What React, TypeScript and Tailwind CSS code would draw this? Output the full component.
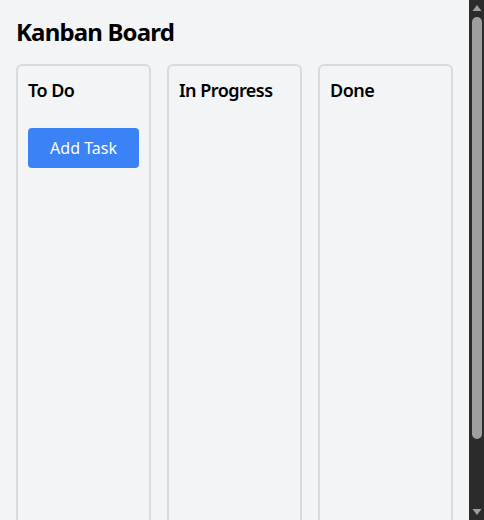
const columns = ["To Do", "In Progress", "Done"];

const Scrollbar = () => (
  <div className="flex h-screen w-[15px] shrink-0 flex-col bg-[#2b2b2b]">
    <svg width="15" height="17" viewBox="0 0 15 17" className="shrink-0">
      <polygon points="8,5 12.5,11 3.5,11" fill="#9f9f9f" />
    </svg>
    <div className="ml-[3px] h-[422px] w-[10px] shrink-0 rounded-full bg-[#9f9f9f]" />
    <div className="flex-1" />
    <svg width="15" height="16" viewBox="0 0 15 16" className="shrink-0">
      <polygon points="3.5,5 12.5,5 8,11" fill="#9f9f9f" />
    </svg>
  </div>
);

const App = () => {
  return (
    <div
      className="flex h-screen overflow-hidden bg-[#f3f4f6] text-black"
      style={{ fontFamily: '"Segoe UI", "Noto Sans", sans-serif' }}
    >
      <div className="min-w-0 flex-1 p-4">
        <h1 className="mb-4 text-2xl font-bold tracking-[-0.035em]">Kanban Board</h1>
        <div className="grid grid-cols-3 gap-4">
          {columns.map((title) => (
            <div key={title} className="min-h-screen rounded-md border-2 border-[#d9dadc] p-2.5">
              <h2 className="mb-6 text-lg font-semibold tracking-[-0.03em]">{title}</h2>
              {title === "To Do" && (
                <button className="w-full rounded bg-[#3b82f6] px-4 py-2 text-white">Add Task</button>
              )}
            </div>
          ))}
        </div>
      </div>
      <Scrollbar />
    </div>
  );
};

export default App;
